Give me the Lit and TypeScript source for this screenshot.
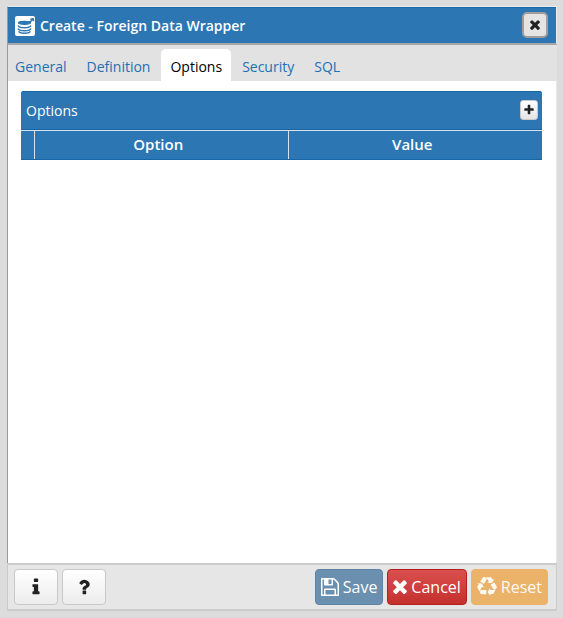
import { LitElement, html, css } from "lit";
import { customElement, property, state } from "lit/decorators.js";
import { classMap } from "lit/directives/class-map.js";

interface Glyph { box: string; d: string }

const FULL = "0 0 1792 1792";

const ICONS: Record<string, Glyph> = {
  times: {
    box: "290 340 1212 1212",
    d: "M1490 1322q0 40-28 68l-136 136q-28 28-68 28t-68-28l-294-294-294 294q-28 28-68 28t-68-28l-136-136q-28-28-28-68t28-68l294-294-294-294q-28-28-28-68t28-68l136-136q28-28 68-28t68 28l294 294 294-294q28-28 68-28t68 28l136 136q28 28 28 68t-28 68l-294 294 294 294q28 28 28 68z",
  },
  plus: {
    box: FULL,
    d: "M1600 736v192q0 40-28 68t-68 28h-416v416q0 40-28 68t-68 28h-192q-40 0-68-28t-28-68v-416h-416q-40 0-68-28t-28-68v-192q0-40 28-68t68-28h416v-416q0-40 28-68t68-28h192q40 0 68 28t28 68v416h416q40 0 68 28t28 68z",
  },
  info: {
    box: FULL,
    d: "M1216 1344v128q0 26-19 45t-45 19h-512q-26 0-45-19t-19-45v-128q0-26 19-45t45-19h64v-384h-64q-26 0-45-19t-19-45v-128q0-26 19-45t45-19h384q26 0 45 19t19 45v576h64q26 0 45 19t19 45zm-128-1152v192q0 26-19 45t-45 19h-256q-26 0-45-19t-19-45v-192q0-26 19-45t45-19h256q26 0 45 19t19 45z",
  },
  question: {
    box: FULL,
    d: "M1088 1256v240q0 16-12 28t-28 12h-240q-16 0-28-12t-12-28v-240q0-16 12-28t28-12h240q16 0 28 12t12 28zm316-600q0 54-15.5 101t-35 76.5-55 59.5-57.5 43.5-61 35.5q-41 23-68.5 65t-27.5 67q0 17-12 32.5t-28 15.5h-240q-15 0-25.5-18.5t-10.5-37.5v-45q0-83 65-156.5t143-108.5q59-27 84-56t25-76q0-42-46.5-74t-107.5-32q-65 0-108 29-35 25-107 115-13 16-31 16-12 0-25-8l-164-125q-13-10-15.5-25t5.5-28q160-266 464-266 80 0 161 31t146 83 106 127.5 41 158.5z",
  },
  save: {
    box: "128 128 1536 1536",
    d: "M512 1536h768v-384h-768v384zm896 0h128v-896q0-14-10-38.5t-20-34.5l-281-281q-10-10-34-20t-39-10v416q0 40-28 68t-68 28h-576q-40 0-68-28t-28-68v-416h-128v1280h128v-416q0-40 28-68t68-28h832q40 0 68 28t28 68v416zm-384-928v-320q0-13-9.5-22.5t-22.5-9.5h-192q-13 0-22.5 9.5t-9.5 22.5v320q0 13 9.5 22.5t22.5 9.5h192q13 0 22.5-9.5t9.5-22.5zm640 32v928q0 40-28 68t-68 28h-1344q-40 0-68-28t-28-68v-1344q0-40 28-68t68-28h928q40 0 88 20t76 48l280 280q28 28 48 76t20 88z",
  },
  recycle: {
    box: FULL,
    d: "M836 1169l-15 368-2 22-420-29q-36-3-67-31.5t-47-65.5q-11-27-14.5-55t4-65 12-55 21.5-64 19-53q78 12 509 28zm-387-586l180 379-147-92q-63 72-111.5 144.5t-72.5 125-39.5 94.5-18.5 63l-4 21-190-357q-17-26-18-56t6-47l8-18q35-63 114-188l-140-86zm1231 517l-188 359q-12 29-36.5 46.5t-43.5 20.5l-18 4q-71 7-219 12l8 164-230-367 211-362 7 173q170 16 283 5t170-33zm-785-924q-47 63-265 435l-317-187-19-12 225-356q20-31 60-45t80-10q24 2 48.5 12t42 21 41.5 33 36 34.5 36 39.5 32 35zm655 307l212 363q18 37 12.5 76t-27.5 74q-13 20-33 37t-38 28-48.5 22-47 16-51.5 14-46 12q-34-72-265-436l313-195zm-143-226l142-83-220 373-419-20 151-86q-34-89-75-166t-75.5-123.5-64.5-80-47-46.5l-17-13 405 1q31-3 58 10.5t39 28.5l11 15q39 61 112 190z",
  },
};

@customElement("ui-icon")
class UiIcon extends LitElement {
  static styles = css`
    :host { display: block; flex: none; width: 20px; height: 20px; }
    .glyph { display: block; width: 100%; height: 100%; }
  `;
  @property() name = "plus";
  render() {
    const glyph = ICONS[this.name];
    return html`<svg class="glyph" viewBox=${glyph.box} fill="currentColor" aria-hidden="true">
      <path d=${glyph.d}></path>
    </svg>`;
  }
}

@customElement("app-root")
class AppRoot extends LitElement {
  static styles = css`
    :host {
      display: flex;
      box-sizing: border-box;
      min-height: 100vh;
      padding: 6px 6px 7px 7px;
      background: #dcdcdc;
      font-family: "Open Sans", "Noto Sans", sans-serif;
      font-size: 14px;
      line-height: 20px;
      color: #000;
    }
    * { box-sizing: border-box; }
    button { font: inherit; margin: 0; cursor: pointer; }
    .dialog { flex: 1; min-width: 0; display: flex; flex-direction: column; }
    .titlebar {
      display: flex;
      align-items: center;
      gap: 5px;
      height: 39px;
      padding: 0 8px 0 7px;
      border: 1px solid #ececec;
      border-left-color: #999;
      border-bottom: 2px solid #a6a6a6;
      background: #2c76b4;
      box-shadow: inset 0 1px #1766a8;
      color: #fff;
    }
    .logo { display: block; flex: none; width: 20px; height: 20px; margin-top: 2px; }
    .title { flex: 1; margin: 0; padding-top: 2px; font-size: 14px; font-weight: 600; }
    .close {
      display: grid;
      place-items: center;
      width: 26px;
      height: 26px;
      padding: 0;
      border: 2px solid #a09d9b;
      border-radius: 5px;
      background: #e4e4e4;
      color: #222;
    }
    .close ui-icon { width: 10px; height: 10px; }
    .tabs {
      display: flex;
      align-items: flex-end;
      gap: 2px;
      height: 36px;
      border-left: 1px solid #999;
      background: #e2e2e2;
    }
    .tab {
      height: 32px;
      padding: 4px 9px 0;
      border: 0;
      border-radius: 5px 5px 0 0;
      background: none;
      color: #2070b4;
    }
    .tab:first-child { padding-left: 7px; }
    .tab.active { background: #fff; color: #000; }
    .panel {
      flex: 1;
      padding: 10px 14px 10px 13px;
      border-left: 1px solid #999;
      border-right: 1px solid #e8e8e8;
      background: #fff;
    }
    .grid { border-radius: 3px 3px 0 0; background: #2c76b4; color: #fff; overflow: hidden; box-shadow: inset 0 1px #1766a8; }
    .gridhead {
      display: flex;
      align-items: center;
      justify-content: space-between;
      height: 39px;
      padding: 0 4px 0 5px;
      border-bottom: 1px solid #1766a8;
    }
    .caption { margin: 0; padding-top: 2px; font-size: 14px; font-weight: 400; }
    .add {
      display: grid;
      place-items: center;
      width: 18px;
      height: 20px;
      padding: 0;
      border: 1px solid #c8c8c8;
      border-radius: 3px;
      background: linear-gradient(#fff, #e4e4e4);
      color: #222;
    }
    .add ui-icon { width: 12px; height: 12px; }
    .columns { width: 100%; border-collapse: separate; border-spacing: 0; table-layout: fixed; border-top: 1px solid #d5e2ee; border-bottom: 1px solid #1766a8; }
    .columns th {
      height: 28px;
      padding: 0 6px 2px 0;
      font-size: 15px;
      font-weight: 600;
      text-align: center;
      border-right: 1px solid #d5e2ee;
    }
    .columns th:last-child { border-right: 0; }
    .columns .tools { width: 14px; }
    .footer {
      display: flex;
      gap: 4px;
      padding: 4px 8px 4px 6px;
      border: 2px solid #cbcbcb;
      border-left-width: 1px;
      border-right-width: 1px;
      background: #e6e6e6;
    }
    .spacer { flex: 1; }
    .btn {
      display: flex;
      align-items: center;
      justify-content: center;
      gap: 4px;
      min-width: 44px;
      height: 36px;
      padding: 0 5px;
      border: 1px solid #c8c8c8;
      border-radius: 4px;
      font-size: 16px;
    }
    .plain { background: linear-gradient(#fff, #ececec); color: #222; }
    .save { background: #6b8fae; border-color: #5f84a6; color: #fff; }
    .save ui-icon { width: 18px; height: 18px; }
    .cancel { background: linear-gradient(#d9504e, #c4302d); border-color: #b31f1c; color: #fff; }
    .cancel ui-icon { width: 14px; height: 14px; }
    .reset { background: #ebb26a; border-color: #ebb26a; color: #fffaf0; }
  `;

  @state() private active = "Options";

  render() {
    const tabs = ["General", "Definition", "Options", "Security", "SQL"];
    return html`
      <section class="dialog" role="dialog" aria-labelledby="title">
        <header class="titlebar">
          <svg class="logo" viewBox="0 0 20 20" aria-hidden="true">
            <rect width="20" height="20" rx="2" fill="#fff" />
            <g fill="none" stroke="#2c76b4" stroke-width="1.3">
              <ellipse cx="9.5" cy="6.8" rx="6" ry="1.5" fill="#2c76b4" />
              <path d="M3 9.5c1 3 12 3 13 0M3 12.5c1 3 12 3 13 0M3.5 15.3c2 2.6 10 2.6 12 0" />
              <path d="M13 6.5C15.5 6 17 5 17.8 3M15.3 3.3l2.9-.8.6 2.6" />
            </g>
          </svg>
          <h1 class="title" id="title">Create - Foreign Data Wrapper</h1>
          <button class="close" aria-label="Close"><ui-icon name="times"></ui-icon></button>
        </header>
        <nav class="tabs" role="tablist">
          ${tabs.map(
            (t) => html`<button
              role="tab"
              aria-selected=${t === this.active}
              class=${classMap({ tab: true, active: t === this.active })}
              @click=${() => (this.active = t)}
            >${t}</button>`
          )}
        </nav>
        <main class="panel">
          <div class="grid">
            <div class="gridhead">
              <h2 class="caption" id="caption">Options</h2>
              <button class="add" aria-label="Add row"><ui-icon name="plus"></ui-icon></button>
            </div>
            <table class="columns" aria-labelledby="caption">
              <thead>
                <tr><th class="tools"></th><th>Option</th><th>Value</th></tr>
              </thead>
            </table>
          </div>
        </main>
        <footer class="footer">
          <button class="btn plain" aria-label="Information"><ui-icon name="info"></ui-icon></button>
          <button class="btn plain" aria-label="Help"><ui-icon name="question"></ui-icon></button>
          <span class="spacer"></span>
          <button class="btn save"><ui-icon name="save"></ui-icon>Save</button>
          <button class="btn cancel"><ui-icon name="times"></ui-icon>Cancel</button>
          <button class="btn reset"><ui-icon name="recycle"></ui-icon>Reset</button>
        </footer>
      </section>
    `;
  }
}
